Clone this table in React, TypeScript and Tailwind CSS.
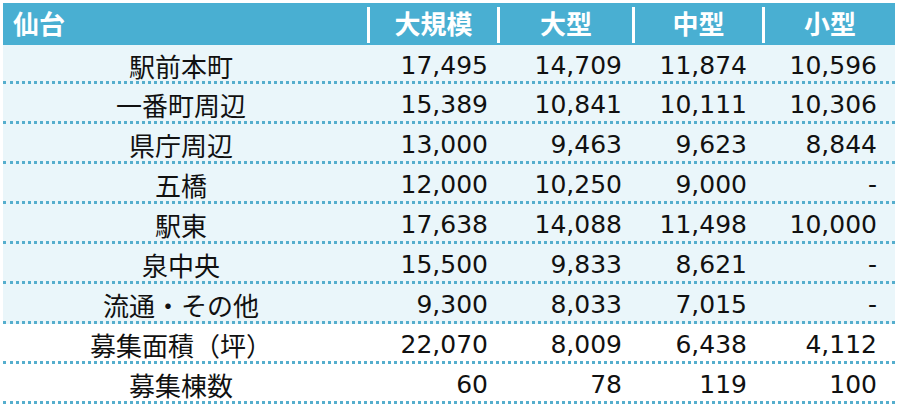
const rows: { label: string; values: string[]; tinted: boolean }[] = [
  { label: "駅前本町", values: ["17,495", "14,709", "11,874", "10,596"], tinted: true },
  { label: "一番町周辺", values: ["15,389", "10,841", "10,111", "10,306"], tinted: true },
  { label: "県庁周辺", values: ["13,000", "9,463", "9,623", "8,844"], tinted: true },
  { label: "五橋", values: ["12,000", "10,250", "9,000", "-"], tinted: true },
  { label: "駅東", values: ["17,638", "14,088", "11,498", "10,000"], tinted: true },
  { label: "泉中央", values: ["15,500", "9,833", "8,621", "-"], tinted: true },
  { label: "流通・その他", values: ["9,300", "8,033", "7,015", "-"], tinted: true },
  { label: "募集面積（坪）", values: ["22,070", "8,009", "6,438", "4,112"], tinted: false },
  { label: "募集棟数", values: ["60", "78", "119", "100"], tinted: false },
];

const headers = ["大規模", "大型", "中型", "小型"];
const cols = "grid grid-cols-[364px_130px_135px_130px_133px]";
const pads = ["pr-[9px]", "pr-[10px]", "pr-[15px]", "pr-[18px]"];

export default function App() {
  return (
    <div className="w-[900px] h-[408px] bg-white pt-[3px] pl-[3px]">
      <div className="w-[892px]">
        {/* Header */}
        <div className={`${cols} h-[42px] bg-[#49afd2] text-white font-bold text-[26px] font-['Noto_Sans_CJK_JP',sans-serif]`}>
          <div className="flex items-center pl-[10px] pb-[3px]">仙台</div>
          {headers.map((h) => (
            <div key={h} className="flex items-center">
              <div className="w-[3px] h-[36px] bg-white mt-[2px]" />
              <div className="flex-1 text-center pb-[3px]">{h}</div>
            </div>
          ))}
        </div>

        {/* Body */}
        {rows.map((r, i) => (
          <div
            key={r.label}
            className={[
              cols,
              i === 0 ? "h-[39px]" : "h-[40px]",
              "border-b-[3px] border-dotted border-[#55aecd] text-[#111]",
              r.tinted ? "bg-[#eaf6fa]" : "bg-white",
            ].join(" ")}
          >
            <div className="flex items-center justify-center pr-[8px] pt-[1px] text-[26px] font-['Noto_Sans_CJK_JP',sans-serif]">
              {r.label}
            </div>
            {r.values.map((v, j) => (
              <div
                key={j}
                className={`flex items-center justify-end ${pads[j]} pt-[1px] text-[25px] font-['DejaVu_Sans',sans-serif]`}
              >
                {v}
              </div>
            ))}
          </div>
        ))}
      </div>
    </div>
  );
}
